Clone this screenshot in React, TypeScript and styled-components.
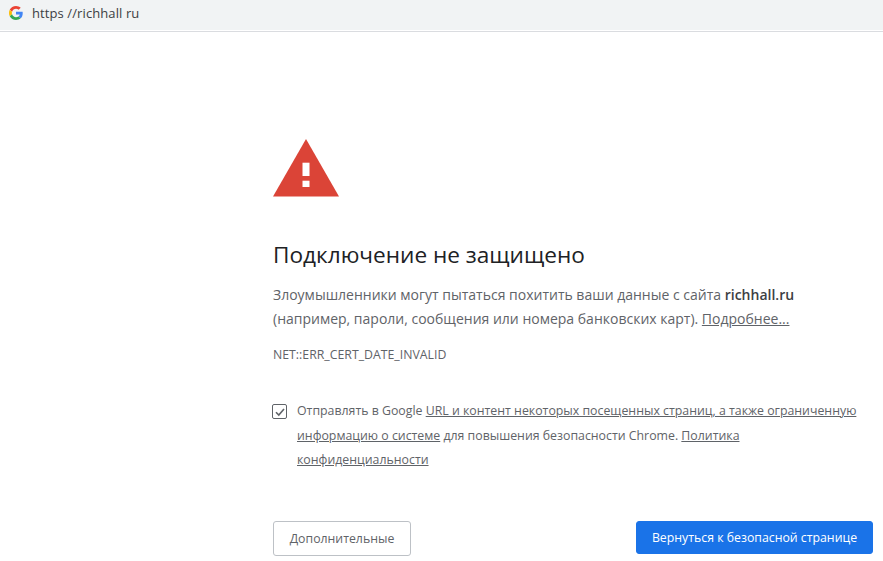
import React from "react";
import styled, { createGlobalStyle } from "styled-components";

const Global = createGlobalStyle`
  html, body { margin: 0; padding: 0; background: #fff; height: 100%; overflow: hidden; }
  body { font-family: "Open Sans", "Noto Sans", sans-serif; }
`;
const Page = styled.div`
  width: 883px; height: 561px; display: flex; flex-direction: column; overflow: hidden;
`;
const AddressBar = styled.div`
  height: 32px; flex: none; display: flex; align-items: center; gap: 9px;
  padding: 0 0 5px 9px; box-sizing: border-box;
  background: #f1f3f4; border-bottom: 1px solid #dadce0;
  box-shadow: inset 0 -1px 0 #fff;
`;
const Url = styled.span`
  font-size: 13px; color: #3c4043; letter-spacing: 0.1px; white-space: pre;
`;
const Main = styled.main`
  padding: 105px 0 0 273px; display: flex; flex-direction: column; align-items: flex-start;
`;
const Warning = styled.svg`
  display: block; width: 66px; height: 58px; margin-bottom: 43px; margin-top: 2px;
`;
const Title = styled.h1`
  margin: 0 0 13px; font-size: 22.6px; line-height: 30px; font-weight: 400; color: #202124; white-space: nowrap;
`;
const Paragraph = styled.p`
  margin: 0 0 16px; font-size: 14px; line-height: 24px; color: #5f6368; white-space: nowrap;
`;
const Strong = styled.b`
  font-weight: 600; color: #3c4043;
`;
const Link = styled.a`
  color: #5f6368; text-decoration: underline;
`;
const Code = styled.div`
  font-size: 12.3px; line-height: 16px; color: #5f6368; margin-bottom: 36px;
`;
const ReportRow = styled.div`
  display: flex; gap: 10px; align-items: flex-start; margin-bottom: 48px; margin-left: -1px;
`;
const Check = styled.span`
  width: 13px; height: 13px; flex: none; margin-top: 5px; border: 1px solid #5f6368; border-radius: 2px;
  display: flex; align-items: center; justify-content: center;
`;
const ReportText = styled.div`
  font-size: 12.33px; line-height: 24.5px; color: #5f6368; white-space: nowrap;
`;
const Buttons = styled.div`
  width: 600px; display: flex; justify-content: space-between; align-items: flex-start;
`;
const Button = styled.button<{ $primary?: boolean }>`
  width: ${p => (p.$primary ? "237px" : "138px")};
  height: ${p => (p.$primary ? "33px" : "35px")};
  box-sizing: border-box; border-radius: 3px; font: inherit; font-size: 12.3px;
  padding: 0; white-space: nowrap;
  border: 1px solid ${p => (p.$primary ? "#1a73e8" : "#bdc1c6")};
  background: ${p => (p.$primary ? "#1a73e8" : "#fff")};
  color: ${p => (p.$primary ? "#fff" : "#5f6368")};
`;

export default function App() {
  return (
    <Page>
      <Global />
      <AddressBar>
        <svg width="14" height="14" viewBox="0 0 48 48">
          <path fill="#EA4335" d="M24 9.5c3.5 0 6.700 1.200 9.200 3.600l6.900-6.900C35.900 2.400 30.500 0 24 0 14.600 0 6.500 5.400 2.600 13.200l8 6.200C12.500 13.700 17.800 9.500 24 9.500z" />
          <path fill="#4285F4" d="M47 24.500c0-1.600-.1-3.100-.4-4.500H24v9h12.900c-.6 3-2.200 5.500-4.700 7.200l7.700 6C44.400 38 47 31.800 47 24.500z" />
          <path fill="#FBBC05" d="M10.500 28.600c-.5-1.400-.8-3-.8-4.600s.3-3.200.8-4.600l-8-6.200C.9 16.500 0 20.100 0 24s.9 7.500 2.600 10.800l7.900-6.200z" />
          <path fill="#34A853" d="M24 48c6.500 0 11.900-2.100 15.900-5.800l-7.700-6c-2.200 1.400-4.900 2.300-8.200 2.300-6.200 0-11.500-4.200-13.400-9.900l-8 6.200C6.500 42.600 14.600 48 24 48z" />
        </svg>
        <Url>https //richhall ru</Url>
      </AddressBar>
      <Main>
        <Warning viewBox="0 0 66 58">
          <path fill="#db4437" d="M33 0 66 57.500H0z" />
          <rect x="29.500" y="23.700" width="7" height="13.300" fill="#fff" />
          <rect x="29.500" y="41.700" width="7" height="6.300" fill="#fff" />
        </Warning>
        <Title>Подключение не защищено</Title>
        <Paragraph>
          Злоумышленники могут пытаться похитить ваши данные с сайта <Strong>richhall.ru</Strong>
          <br />
          (например, пароли, сообщения или номера банковских карт). <Link>Подробнее...</Link>
        </Paragraph>
        <Code>NET::ERR_CERT_DATE_INVALID</Code>
        <ReportRow>
          <Check>
            <svg width="12" height="12" viewBox="0 0 12 12">
              <path d="M2 6.200 4.800 9 10 3" fill="none" stroke="#5f6368" strokeWidth="1.600" />
            </svg>
          </Check>
          <ReportText>
            Отправлять в Google <Link>URL и контент некоторых посещенных страниц, а также ограниченную</Link>
            <br />
            <Link>информацию о системе</Link> для повышения безопасности Chrome. <Link>Политика</Link>
            <br />
            <Link>конфиденциальности</Link>
          </ReportText>
        </ReportRow>
        <Buttons>
          <Button>Дополнительные</Button>
          <Button $primary>Вернуться к безопасной странице</Button>
        </Buttons>
      </Main>
    </Page>
  );
}
